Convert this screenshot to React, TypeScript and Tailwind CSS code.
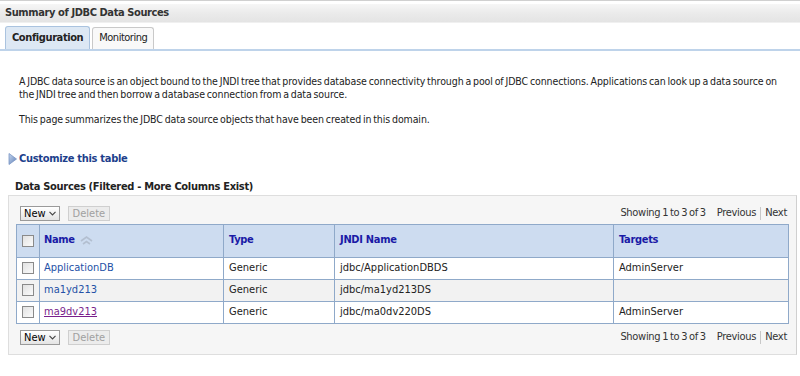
import React from "react";

interface DataSource {
  name: string;
  type: string;
  jndi: string;
  targets: string;
  visited?: boolean;
}

const rows: DataSource[] = [
  { name: "ApplicationDB", type: "Generic", jndi: "jdbc/ApplicationDBDS", targets: "AdminServer" },
  { name: "ma1yd213", type: "Generic", jndi: "jdbc/ma1yd213DS", targets: "" },
  { name: "ma9dv213", type: "Generic", jndi: "jdbc/ma0dv220DS", targets: "AdminServer", visited: true },
];

const font = "font-['DejaVu_Sans_Condensed','DejaVu_Sans',Tahoma,sans-serif]";

const Checkbox: React.FC = () => (
  <span className="block w-[12px] h-[12px] border border-[#8a8a8a] bg-gradient-to-br from-[#e2e2e2] to-[#fbfbfb]" />
);

const SortIcon: React.FC = () => (
  <svg width="13" height="9" viewBox="0 0 13 9" className="ml-[5px]">
    <path d="M1 5 L6.5 1 L12 5" fill="none" stroke="#b3bfd0" strokeWidth="1.6" />
    <path d="M3 8 L6.5 5.5 L10 8" fill="none" stroke="#b3bfd0" strokeWidth="1.6" />
  </svg>
);

const Toolbar: React.FC = () => (
  <div className="flex items-center justify-between h-[15px] pl-[11px] pr-[9px]">
    <div className="flex items-center gap-[8px]">
      <button className="h-[15px] px-[3px] flex items-center gap-[3px] border border-[#9a9a9a] bg-gradient-to-b from-white to-[#e4e4e4] text-[11px] text-black leading-none">
        New
        <svg width="7" height="5" viewBox="0 0 7 5">
          <path d="M0.5 0.8 L3.5 4 L6.5 0.8" fill="none" stroke="#444" strokeWidth="1.1" />
        </svg>
      </button>
      <button className="h-[15px] px-[4px] border border-[#cfcfcf] bg-[#ececec] text-[11px] text-[#a0a0a0] leading-none">
        Delete
      </button>
    </div>
    <div className="flex items-center text-[11px] text-[#333] tracking-[-0.3px] [word-spacing:-1px]">
      <span>Showing 1 to 3 of 3</span>
      <span className="ml-[11px]">Previous</span>
      <span className="mx-[4px] w-px h-[13px] bg-[#c8c8c8]" />
      <span>Next</span>
    </div>
  </div>
);

const App: React.FC = () => {
  return (
    <div className={`w-[800px] h-[376px] bg-white overflow-hidden ${font} text-[11px] text-[#222]`}>
      <div className="border-t border-[#d0d0d0] pt-[3px]">
        <div className="h-[19px] flex items-center pl-[5px] bg-gradient-to-b from-[#f6f6f6] via-[#ebebeb] to-[#e4e4e4] border-b border-[#f0f0f0]">
          <h1 className="text-[11px] font-bold text-[#333] tracking-[-0.4px]">Summary of JDBC Data Sources</h1>
        </div>
      </div>

      <div className="mt-[3px] flex items-end gap-[2px] pl-[5px] border-b-2 border-[#bed3ea]">
        <div className="h-[23px] px-[6px] flex items-center bg-[#dde8f4] border border-b-0 border-[#aac3df] rounded-t-[3px] font-bold text-[#222] tracking-[-0.4px]">
          Configuration
        </div>
        <div className="h-[22px] px-[6px] flex items-center bg-[#f9f9f9] border border-b-0 border-[#c9c9c9] rounded-t-[3px] text-[#222] tracking-[-0.5px]">
          Monitoring
        </div>
      </div>

      <div className="pl-[19px] mt-[24px] leading-[13px] text-[10.5px] tracking-[-0.1px] [word-spacing:-1px] whitespace-nowrap">
        <p>
          A JDBC data source is an object bound to the JNDI tree that provides database connectivity through a pool of JDBC connections. Applications can look up a data source on
          <br />
          the JNDI tree and then borrow a database connection from a data source.
        </p>
        <p className="mt-[12px]">This page summarizes the JDBC data source objects that have been created in this domain.</p>
      </div>

      <div className="mt-[25px] pl-[8px] flex items-center gap-[2px]">
        <svg width="9" height="12" viewBox="0 0 9 12">
          <defs>
            <linearGradient id="tri" x1="0" y1="0" x2="1" y2="1">
              <stop offset="0" stopColor="#c6d6ee" />
              <stop offset="1" stopColor="#5d80b8" />
            </linearGradient>
          </defs>
          <path d="M1 0.5 L8.5 6 L1 11.5 Z" fill="url(#tri)" stroke="#7a96c4" strokeWidth="0.8" />
        </svg>
        <span className="font-bold text-[#1d3f8c] text-[11px] tracking-[-0.3px]">Customize this table</span>
      </div>

      <div className="mt-[12px] pl-[15px] font-bold text-[11px] text-[#222] leading-[14px] tracking-[-0.3px]">
        Data Sources (Filtered - More Columns Exist)
      </div>

      <div className="mt-[1px] ml-[8px] w-[789px] border border-[#dedede] border-r-[#d0d0d0] bg-[#f6f6f6] pt-[10px] pb-[9px]">
        <Toolbar />

        <table className="mt-[3px] ml-[7px] w-[773px] border-collapse bg-white">
          <thead>
            <tr className="h-[33px] bg-[#cddcf0] tracking-[-0.3px]">
              <th className="w-[23px] border border-[#8fa9c9] px-[5px]">
                <Checkbox />
              </th>
              <th className="w-[184px] border border-[#8fa9c9] pl-[4px] text-left font-bold text-[#1a1aa6]">
                <span className="flex items-center">
                  Name
                  <SortIcon />
                </span>
              </th>
              <th className="w-[111px] border border-[#8fa9c9] pl-[5px] text-left font-bold text-[#1a1aa6]">Type</th>
              <th className="w-[279px] border border-[#8fa9c9] pl-[5px] text-left font-bold text-[#1a1aa6]">JNDI Name</th>
              <th className="border border-[#8fa9c9] pl-[5px] text-left font-bold text-[#1a1aa6]">Targets</th>
            </tr>
          </thead>
          <tbody>
            {rows.map((r, i) => (
              <tr key={r.name} className={`h-[22px] ${i % 2 === 1 ? "bg-[#f2f2f2]" : "bg-white"}`}>
                <td className="border border-[#8fa9c9] px-[5px]">
                  <Checkbox />
                </td>
                <td className="border border-[#8fa9c9] pl-[4px]">
                  <span className={r.visited ? "text-[#7a1f8c] underline" : "text-[#2451a6]"}>{r.name}</span>
                </td>
                <td className="border border-[#8fa9c9] pl-[5px] text-[#222]">{r.type}</td>
                <td className="border border-[#8fa9c9] pl-[5px] text-[#222]">{r.jndi}</td>
                <td className="border border-[#8fa9c9] pl-[5px] text-[#222]">{r.targets}</td>
              </tr>
            ))}
          </tbody>
        </table>

        <div className="mt-[6px]">
          <Toolbar />
        </div>
      </div>
    </div>
  );
};

export default App;
